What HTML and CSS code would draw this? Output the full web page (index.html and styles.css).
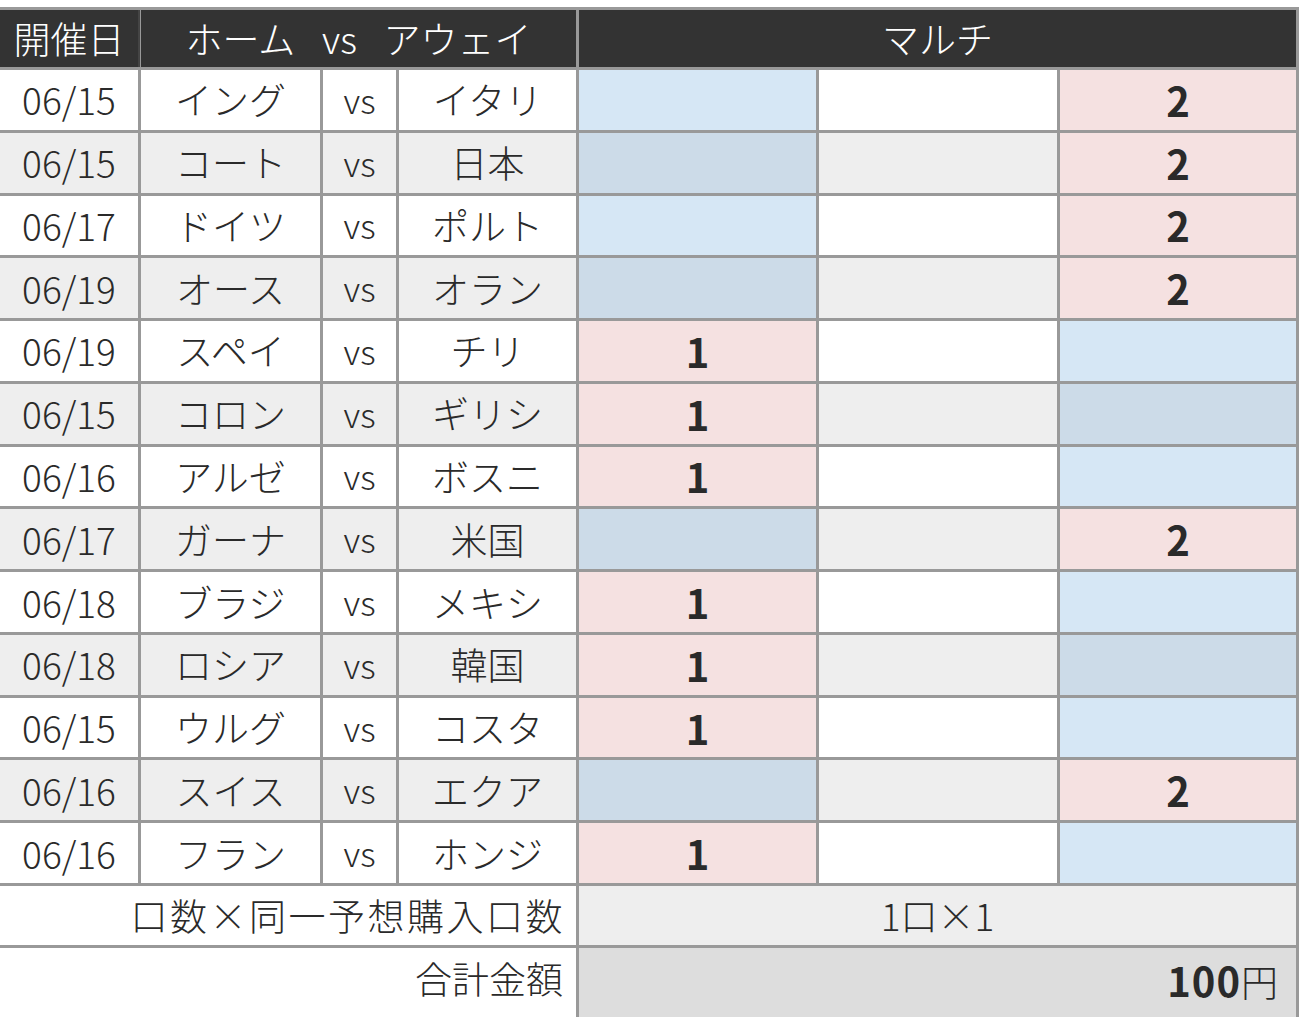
FILE: index.html
```html
<!DOCTYPE html>
<html lang="ja">
<head>
<meta charset="utf-8">
<title>マルチ</title>
<link rel="stylesheet" href="styles.css">
</head>
<body>
<div class="wrap">
<table class="grid">
  <colgroup>
    <col class="c-date"><col class="c-home"><col class="c-vs"><col class="c-away"><col class="c-m"><col class="c-m2"><col class="c-m3">
  </colgroup>
  <thead>
    <tr class="head">
      <th>開催日</th>
      <th colspan="3" class="match-head">ホーム vs アウェイ</th>
      <th colspan="3">マルチ</th>
    </tr>
  </thead>
  <tbody>
    <tr><td>06/15</td><td>イング</td><td class="vs">vs</td><td>イタリ</td><td class="blue"></td><td></td><td class="pink num">2</td></tr>
    <tr class="even"><td>06/15</td><td>コート</td><td class="vs">vs</td><td>日本</td><td class="blue"></td><td></td><td class="pink num">2</td></tr>
    <tr><td>06/17</td><td>ドイツ</td><td class="vs">vs</td><td>ポルト</td><td class="blue"></td><td></td><td class="pink num">2</td></tr>
    <tr class="even"><td>06/19</td><td>オース</td><td class="vs">vs</td><td>オラン</td><td class="blue"></td><td></td><td class="pink num">2</td></tr>
    <tr><td>06/19</td><td>スペイ</td><td class="vs">vs</td><td>チリ</td><td class="pink num">1</td><td></td><td class="blue"></td></tr>
    <tr class="even"><td>06/15</td><td>コロン</td><td class="vs">vs</td><td>ギリシ</td><td class="pink num">1</td><td></td><td class="blue"></td></tr>
    <tr><td>06/16</td><td>アルゼ</td><td class="vs">vs</td><td>ボスニ</td><td class="pink num">1</td><td></td><td class="blue"></td></tr>
    <tr class="even"><td>06/17</td><td>ガーナ</td><td class="vs">vs</td><td>米国</td><td class="blue"></td><td></td><td class="pink num">2</td></tr>
    <tr><td>06/18</td><td>ブラジ</td><td class="vs">vs</td><td>メキシ</td><td class="pink num">1</td><td></td><td class="blue"></td></tr>
    <tr class="even"><td>06/18</td><td>ロシア</td><td class="vs">vs</td><td>韓国</td><td class="pink num">1</td><td></td><td class="blue"></td></tr>
    <tr><td>06/15</td><td>ウルグ</td><td class="vs">vs</td><td>コスタ</td><td class="pink num">1</td><td></td><td class="blue"></td></tr>
    <tr class="even"><td>06/16</td><td>スイス</td><td class="vs">vs</td><td>エクア</td><td class="blue"></td><td></td><td class="pink num">2</td></tr>
    <tr><td>06/16</td><td>フラン</td><td class="vs">vs</td><td>ホンジ</td><td class="pink num">1</td><td></td><td class="blue"></td></tr>
    <tr class="sum1"><td colspan="4" class="label wide">口数×同一予想購入口数</td><td colspan="3" class="val-center">1口×1</td></tr>
    <tr class="sum2"><td colspan="4" class="label">合計金額</td><td colspan="3" class="val-right"><b>100</b>円</td></tr>
  </tbody>
</table>
</div>
</body>
</html>
```

FILE: styles.css
```css
html, body {
  margin: 0;
  padding: 0;
  background: #fff;
}
body {
  font-family: "Noto Sans CJK JP", "Noto Sans", sans-serif;
  color: #2a2a2a;
  overflow: hidden;
}
.wrap {
  padding-top: 7px;
}
.grid {
  margin-left: -3px;
  border-collapse: separate;
  border-spacing: 3px;
  background: #999;
  table-layout: fixed;
  width: 1302px;
  font-size: 37px;
  font-weight: 300;
  line-height: 1;
}
.c-date { width: 138px; }
.c-home { width: 179px; }
.c-vs { width: 73px; }
.c-away { width: 177px; }
.c-m { width: 237px; }
.c-m2 { width: 238px; }
.c-m3 { width: 236px; }

.grid th,
.grid td {
  padding: 0;
  text-align: center;
  vertical-align: middle;
  white-space: nowrap;
  overflow: hidden;
}
.head th {
  background: #333;
  color: #fff;
  font-weight: 300;
  height: 57px;
}
.head th:first-child {
  box-shadow: 2px 0 0 #444;
}
.head th.match-head {
  word-spacing: 0.5em;
}
.grid tbody td {
  background: #fff;
  height: 59.77px;
}
.grid tbody tr.even td {
  background: #eee;
}
.grid td.vs {
  font-size: 34px;
}
.grid tbody td.blue { background: #d6e7f5; }
.grid tbody tr.even td.blue { background: #ccdbe8; }
.grid tbody td.pink,
.grid tbody tr.even td.pink { background: #f5e1e1; }
.grid td.num {
  font-weight: 700;
  font-size: 40px;
}
.grid tbody tr.sum1 td { height: 59px; }
.grid tbody tr.sum2 td { height: 72px; vertical-align: top; padding-top: 12px; }
.grid td.label {
  background: #fff;
  text-align: right;
  padding-right: 13px;
}
.grid td.label.wide {
  letter-spacing: 2.5px;
  padding-right: 11px;
}
.grid tbody tr.sum1 td.val-center {
  background: #eee;
  text-align: center;
}
.grid tbody tr.sum2 td.val-right {
  background: #ddd;
  text-align: right;
  padding-right: 18px;
}
.val-right b {
  font-weight: 700;
  font-size: 40px;
  letter-spacing: 1px;
}
```
